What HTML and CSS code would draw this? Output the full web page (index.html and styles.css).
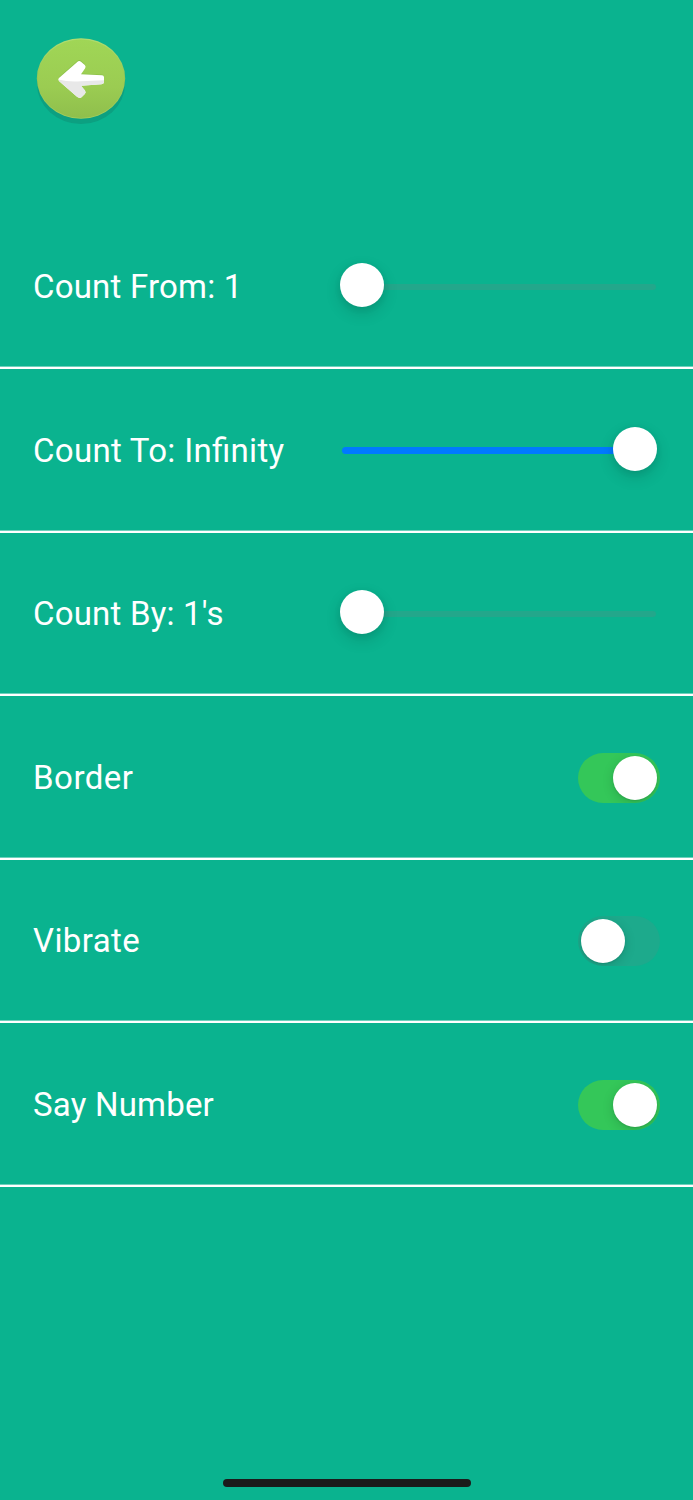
FILE: index.html
```html
<!DOCTYPE html>
<html lang="en">
<head>
<meta charset="utf-8">
<title>Counter settings</title>
<link rel="stylesheet" href="styles.css">
</head>
<body>
<main class="screen">
  <header class="header">
    <button class="back" aria-label="Back">
      <svg class="back-icon" viewBox="0 0 90 88" width="90" height="88">
        <defs>
          <linearGradient id="face" x1="0" y1="0" x2="0" y2="1">
            <stop offset="0" stop-color="#a0d656"/>
            <stop offset=".6" stop-color="#9bcc52"/>
            <stop offset="1" stop-color="#8fbf4c"/>
          </linearGradient>
          <linearGradient id="rim" x1="0" y1="0" x2="0" y2="1">
            <stop offset="0" stop-color="#b0dd70"/>
            <stop offset=".5" stop-color="#94c653"/>
            <stop offset="1" stop-color="#a4cd5b"/>
          </linearGradient>
        </defs>
        <ellipse cx="45" cy="46" rx="44" ry="40" fill="#0ca081"/>
        <ellipse cx="45" cy="40.5" rx="44.200" ry="40.300" fill="url(#rim)"/>
        <ellipse cx="45" cy="40.800" rx="43.300" ry="39.300" fill="url(#face)"/>
        <path d="M23.500 39.500 L41 24.200 Q43 22.200 45 23.700 L48 26.200 Q49.800 28 48.300 30.500 L44 36.500 L66 37.500 Q68 37.700 68 39.500 V44 L44.500 47.500 L23.500 43.500Z" fill="#80b842" opacity=".55" transform="translate(0 -1)"/>
        <path d="M23.500 39.500 L41 24.200 Q43 22.200 45 23.700 L48.800 27 Q50.300 28.500 49 30.500 L45 36.200 L66 37.300 Q68 37.500 68 39.300 V44 Q68 46 65.500 46.200 L45 47.700 L49 52.500 Q50.300 54.500 48.800 56 L45.500 59.300 Q43.500 60.800 41 58.800 L23.500 43.500 Q21.200 41.500 23.500 39.500Z" fill="#fff"/>
        <path d="M22.400 41.600 Q32 44.200 45 43.300 L68 42.300 V44 Q68 46 65.500 46.200 L45 47.700 L49 52.500 Q50.300 54.500 48.800 56 L45.500 59.300 Q43.500 60.800 41 58.800 L23.500 43.500Z" fill="#e8e8e8"/>
      </svg>
    </button>
  </header>
  <section class="settings">
    <div class="row">
      <span class="label">Count From: 1</span>
      <div class="slider slider-min"><span class="track"></span><span class="thumb"></span></div>
    </div>
    <div class="row">
      <span class="label label-to">Count To: Infinity</span>
      <div class="slider slider-max"><span class="track"></span><span class="thumb"></span></div>
    </div>
    <div class="row">
      <span class="label">Count By: 1's</span>
      <div class="slider slider-min"><span class="track"></span><span class="thumb"></span></div>
    </div>
    <div class="row">
      <span class="label label-border">Border</span>
      <div class="switch switch-on"><span class="knob"></span></div>
    </div>
    <div class="row">
      <span class="label label-vibrate">Vibrate</span>
      <div class="switch"><span class="knob"></span></div>
    </div>
    <div class="row">
      <span class="label">Say Number</span>
      <div class="switch switch-on"><span class="knob"></span></div>
    </div>
  </section>
  <footer class="footer"><span class="home-bar"></span></footer>
</main>
</body>
</html>
```
FILE: styles.css
```css
* { box-sizing: border-box; }
body { margin: 0; background: #0ab38f; }
.screen {
  display: flex;
  flex-direction: column;
  height: 1500px;
  color: #fff;
  font-family: Roboto, sans-serif;
}
.header { height: 205.900px; padding: 37.500px 36px 0; }
.back { display: block; padding: 0; border: 0; background: none; }
.back-icon { display: block; }
.row {
  display: flex;
  align-items: center;
  justify-content: space-between;
  height: 163.500px;
  padding: 1px 33px 0;
  border-bottom: 2px solid #fff;
  box-shadow: inset 0 -1px rgba(255, 255, 255, .4);
}
.label {
  font-size: 33px;
  line-height: 40px;
  letter-spacing: .2px;
  font-feature-settings: "liga" 1;
  white-space: nowrap;
}
.label-to { letter-spacing: .3px; }
.label-border { letter-spacing: .5px; }
.label-vibrate { letter-spacing: .4px; }
.slider {
  display: flex;
  align-items: center;
  position: relative;
  width: 320px;
  height: 44px;
  padding: 0 4px 0 2px;
}
.track { width: 314px; height: 6.500px; border-radius: 4px; background: #23a78b; }
.slider-max .track { background: #007aff; }
.thumb {
  position: absolute;
  top: -2px;
  left: 0;
  width: 44px;
  height: 44px;
  border-radius: 50%;
  background: #fff;
  box-shadow: 0 6px 16px rgba(0, 0, 0, .14), 0 2px 7px rgba(0, 0, 0, .07);
}
.slider-max .thumb { left: 273px; }
.switch {
  display: flex;
  width: 82px;
  height: 50px;
  padding: 3px;
  border-radius: 25px;
  background: #1daa8c;
  overflow: hidden;
}
.switch-on { justify-content: flex-end; background: #34c759; }
.knob {
  width: 44px;
  height: 44px;
  border-radius: 50%;
  background: #fff;
  box-shadow: 0 3px 12px rgba(0, 0, 0, .15), 0 1px 2px rgba(0, 0, 0, .1);
}
.footer { display: flex; justify-content: center; margin-top: auto; padding-bottom: 13px; }
.home-bar { width: 248px; height: 8px; border-radius: 4px; background: #1b1b1b; }
```
